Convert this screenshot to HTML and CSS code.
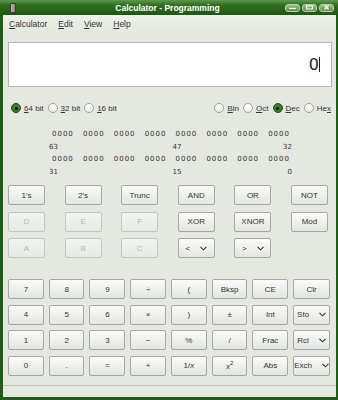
FILE: index.html
```html
<!DOCTYPE html>
<html lang="en">
    <head>
        <meta charset="utf-8">
        <link rel="stylesheet" href="styles.css">
    </head>
    <body>
        <div class="frame">
            <div class="titlebar">
                <span class="appicon"></span>
                <span class="title">Calculator - Programming</span>
                <div class="wbtns">
                    <span class="wbtn"><svg width="9" height="5" viewBox="0 0 9 5"><path d="M1 3.5h7" stroke="#fff" stroke-width="1.2"/></svg></span>
                    <span class="wbtn"><svg width="9" height="5" viewBox="0 0 9 5"><rect x="1.5" y="1" width="6" height="3" fill="none" stroke="#fff" stroke-width="1"/></svg></span>
                    <span class="wbtn"><svg width="9" height="5" viewBox="0 0 9 5"><path d="M2.5 0.5l4 4M6.5 0.5l-4 4" stroke="#fff" stroke-width="1.1"/></svg></span>
                </div>
            </div>

            <div class="client">
                <div class="menubar">
                    <span><u>C</u>alculator</span>
                    <span><u>E</u>dit</span>
                    <span><u>V</u>iew</span>
                    <span><u>H</u>elp</span>
                </div>

                <div class="display">
                    <span class="value">0</span><span class="caret"></span>
                </div>

                <div class="radios">
                    <div class="group">
                        <span class="radio on"></span><span class="lbl"><u>6</u>4 bit</span>
                        <span class="radio"></span><span class="lbl"><u>3</u>2 bit</span>
                        <span class="radio"></span><span class="lbl"><u>1</u>6 bit</span>
                    </div>
                    <div class="group">
                        <span class="radio"></span><span class="lbl"><u>B</u>in</span>
                        <span class="radio"></span><span class="lbl"><u>O</u>ct</span>
                        <span class="radio on"></span><span class="lbl"><u>D</u>ec</span>
                        <span class="radio"></span><span class="lbl">He<u>x</u></span>
                    </div>
                </div>

                <div class="bits">
                    <span>0000</span><span>0000</span><span>0000</span><span>0000</span><span>0000</span><span>0000</span><span>0000</span><span>0000</span>
                    <span class="lab">63</span><span></span><span></span><span></span><span class="lab">47</span><span></span><span></span><span class="lab last">32</span>
                    <span>0000</span><span>0000</span><span>0000</span><span>0000</span><span>0000</span><span>0000</span><span>0000</span><span>0000</span>
                    <span class="lab">31</span><span></span><span></span><span></span><span class="lab">15</span><span></span><span></span><span class="lab last">0</span>
                </div>

                <div class="upper">
                    <button>1's</button>
                    <button>2's</button>
                    <button>Trunc</button>
                    <button>AND</button>
                    <button>OR</button>
                    <button>NOT</button>
                    <button disabled>D</button>
                    <button disabled>E</button>
                    <button disabled>F</button>
                    <button>XOR</button>
                    <button>XNOR</button>
                    <button>Mod</button>
                    <button disabled>A</button>
                    <button disabled>B</button>
                    <button disabled>C</button>
                    <button class="drop"><span>&lt;</span><svg width="7" height="5" viewBox="0 0 7 5"><path d="M0.5 0.8l3 3 3-3" fill="none" stroke="#333" stroke-width="1.1"/></svg></button>
                    <button class="drop"><span>&gt;</span><svg width="7" height="5" viewBox="0 0 7 5"><path d="M0.5 0.8l3 3 3-3" fill="none" stroke="#333" stroke-width="1.1"/></svg></button>
                </div>

                <div class="lower">
                    <button>7</button>
                    <button>8</button>
                    <button>9</button>
                    <button>÷</button>
                    <button>(</button>
                    <button>Bksp</button>
                    <button>CE</button>
                    <button>Clr</button>

                    <button>4</button>
                    <button>5</button>
                    <button>6</button>
                    <button>×</button>
                    <button>)</button>
                    <button>±</button>
                    <button>Int</button>
                    <button class="drop"><span>Sto</span><svg width="7" height="5" viewBox="0 0 7 5"><path d="M0.5 0.8l3 3 3-3" fill="none" stroke="#333" stroke-width="1.1"/></svg></button>

                    <button>1</button>
                    <button>2</button>
                    <button>3</button>
                    <button>−</button>
                    <button>%</button>
                    <button>/</button>
                    <button>Frac</button>
                    <button class="drop"><span>Rcl</span><svg width="7" height="5" viewBox="0 0 7 5"><path d="M0.5 0.8l3 3 3-3" fill="none" stroke="#333" stroke-width="1.1"/></svg></button>

                    <button>0</button>
                    <button>.</button>
                    <button>=</button>
                    <button>+</button>
                    <button>1/<i>x</i></button>
                    <button><i>x</i><sup>2</sup></button>
                    <button>Abs</button>
                    <button class="drop"><span>Exch</span><svg width="7" height="5" viewBox="0 0 7 5"><path d="M0.5 0.8l3 3 3-3" fill="none" stroke="#333" stroke-width="1.1"/></svg></button>
                </div>

                <div class="spacer"></div>
                <div class="statusbar"></div>
            </div>
        </div>
    </body>
</html>
```

FILE: styles.css
```css
*{
    margin:0;
    padding:0;
    box-sizing: border-box;
}
body{
    width: 338px;
    height: 400px;
    font-family: "Liberation Sans", Arial, sans-serif;
    color: #333;
}
.frame{
    width: 338px;
    height: 400px;
    display: flex;
    flex-direction: column;
    background-color: #1f5c17;
}

/* title bar */
.titlebar{
    height: 15px;
    flex: none;
    display: flex;
    align-items: center;
    padding: 0 4px 0 10px;
    background: linear-gradient(#5e9a4c, #2f6d22 35%, #1d5813);
}
.appicon{
    width: 6px;
    height: 10px;
    border: 1px solid #3a3a32;
    border-radius: 1px;
    background: linear-gradient(90deg, #b9b6a8, #8c8878);
}
.title{
    flex: 1;
    text-align: center;
    color: #fff;
    font-size: 8.5px;
    font-weight: bold;
    padding-left: 34px;
}
.wbtns{
    display: flex;
    gap: 2px;
}
.wbtn{
    width: 15px;
    height: 8px;
    display: flex;
    align-items: center;
    justify-content: center;
    border: 1px solid #b7d3a9;
    border-radius: 3px;
    background: linear-gradient(#9cc08a, #5e8d4d);
}

/* window body */
.client{
    flex: 1;
    margin: 0 2px 3px 3px;
    display: flex;
    flex-direction: column;
    background-color: #e4e8e0;
}
.menubar{
    height: 17px;
    flex: none;
    display: flex;
    align-items: center;
    gap: 11px;
    padding-left: 6px;
    font-size: 8.5px;
    color: #333;
    background: linear-gradient(#eef1ea, #e4e8e0);
}
.display{
    height: 45px;
    margin: 10px 4px 0 5px;
    display: flex;
    align-items: center;
    justify-content: flex-end;
    padding-right: 11px;
    background-color: #fff;
    border: 1px solid #b3b7ae;
}
.display .value{
    font-family: "DejaVu Sans", sans-serif;
    font-size: 16px;
    color: #222;
}
.display .caret{
    width: 1px;
    height: 15px;
    background-color: #222;
}

/* radio row */
.radios{
    height: 12px;
    margin: 15px 5px 0 8px;
    display: flex;
    justify-content: space-between;
    align-items: center;
    font-size: 8px;
}
.group{
    display: flex;
    align-items: center;
}
.radio{
    width: 10px;
    height: 10px;
    border-radius: 50%;
    border: 1px solid #9fa39b;
    background: linear-gradient(#fff, #eceee9);
    margin-right: 3px;
    display: flex;
    align-items: center;
    justify-content: center;
}
.radio.on{
    border-color: #25521a;
    background: #3c7a2d;
}
.radio.on::after{
    content: "";
    width: 3px;
    height: 3px;
    border-radius: 50%;
    background-color: #0c1a08;
}
.lbl{
    margin-right: 4px;
}
.group .lbl:last-child{
    margin-right: 0;
}

/* bit display */
.bits{
    margin: 14px 0 0 46px;
    width: 243px;
    display: grid;
    grid-template-columns: repeat(8, minmax(0, 1fr));
    column-gap: 4px;
    font-family: "DejaVu Sans", sans-serif;
    font-size: 7px;
    line-height: 12.5px;
    color: #333;
}
.bits span{
    letter-spacing: 1px;
    white-space: nowrap;
    padding-left: 3px;
}
.bits .lab{
    letter-spacing: 0;
    padding-left: 0;
}
.bits .lab.last{
    text-align: right;
}

/* buttons */
button{
    font-family: "Liberation Sans", Arial, sans-serif;
    font-size: 8px;
    color: #333;
    height: 20px;
    border: 1px solid #a5a9a1;
    border-radius: 2px;
    background: linear-gradient(#fbfbf9, #eef0ec 50%, #e2e5df);
}
button:disabled{
    color: #b6b9b2;
    border-color: #c3c6bf;
    background: linear-gradient(#f1f3ef, #e7eae4);
}
button.drop{
    display: flex;
    align-items: center;
    justify-content: center;
    gap: 10px;
}
button sup{
    font-size: 6px;
    vertical-align: 4px;
}
.upper{
    margin: 7px 0 0 5px;
    width: 320px;
    display: grid;
    grid-template-columns: repeat(6, 37px);
    justify-content: space-between;
    row-gap: 6.5px;
}
.lower{
    margin: 21px 0 0 5px;
    width: 322px;
    display: grid;
    grid-template-columns: repeat(8, 1fr);
    column-gap: 5px;
    row-gap: 5.5px;
}
.spacer{
    flex: 1;
}
.statusbar{
    height: 12px;
    flex: none;
    border-top: 1px solid #bfc3bb;
    background-color: #e4e8e0;
}
```
